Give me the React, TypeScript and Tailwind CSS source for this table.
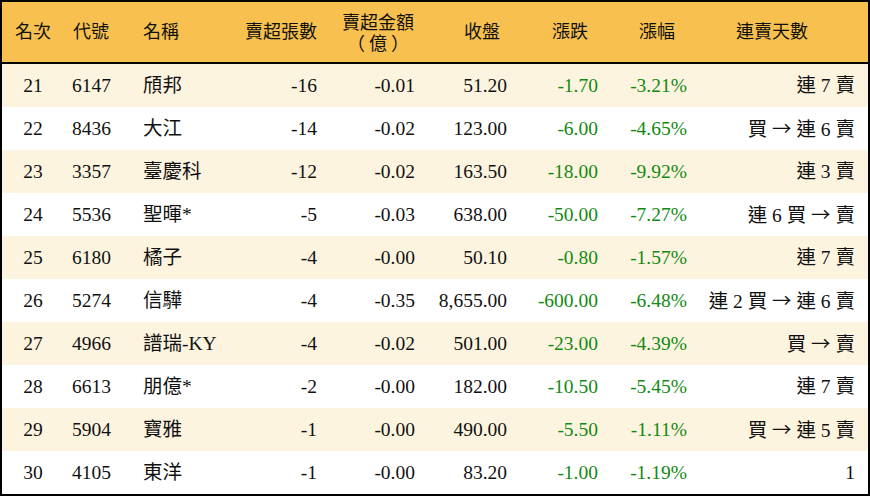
import React from 'react'

type Row = {
  rank: number
  code: string
  name: string
  lots: string
  amount: string
  close: string
  change: string
  pct: string
  streak: string
}

const rows: Row[] = [
  { rank: 21, code: '6147', name: '頎邦', lots: '-16', amount: '-0.01', close: '51.20', change: '-1.70', pct: '-3.21%', streak: '連 7 賣' },
  { rank: 22, code: '8436', name: '大江', lots: '-14', amount: '-0.02', close: '123.00', change: '-6.00', pct: '-4.65%', streak: '買 → 連 6 賣' },
  { rank: 23, code: '3357', name: '臺慶科', lots: '-12', amount: '-0.02', close: '163.50', change: '-18.00', pct: '-9.92%', streak: '連 3 賣' },
  { rank: 24, code: '5536', name: '聖暉*', lots: '-5', amount: '-0.03', close: '638.00', change: '-50.00', pct: '-7.27%', streak: '連 6 買 → 賣' },
  { rank: 25, code: '6180', name: '橘子', lots: '-4', amount: '-0.00', close: '50.10', change: '-0.80', pct: '-1.57%', streak: '連 7 賣' },
  { rank: 26, code: '5274', name: '信驊', lots: '-4', amount: '-0.35', close: '8,655.00', change: '-600.00', pct: '-6.48%', streak: '連 2 買 → 連 6 賣' },
  { rank: 27, code: '4966', name: '譜瑞-KY', lots: '-4', amount: '-0.02', close: '501.00', change: '-23.00', pct: '-4.39%', streak: '買 → 賣' },
  { rank: 28, code: '6613', name: '朋億*', lots: '-2', amount: '-0.00', close: '182.00', change: '-10.50', pct: '-5.45%', streak: '連 7 賣' },
  { rank: 29, code: '5904', name: '寶雅', lots: '-1', amount: '-0.00', close: '490.00', change: '-5.50', pct: '-1.11%', streak: '買 → 連 5 賣' },
  { rank: 30, code: '4105', name: '東洋', lots: '-1', amount: '-0.00', close: '83.20', change: '-1.00', pct: '-1.19%', streak: '1' },
]

// column widths add up to 866 (870 minus the 2px frame on each side)
const cols = 'grid grid-cols-[62px_71px_95px_97px_98px_92px_91px_89px_171px]'
const cjk = { fontFamily: '"Noto Sans CJK TC", sans-serif' }

// arrows look longer in the CJK face, so swap the font just for them
function Streak({ text }: { text: string }) {
  const parts = text.split('→')
  return (
    <>
      {parts.map((p, i) => (
        <React.Fragment key={i}>
          {i > 0 && <span style={cjk}>→</span>}
          {p}
        </React.Fragment>
      ))}
    </>
  )
}

export default function App() {
  return (
    <div
      className="w-[870px] h-[496px] bg-black pt-[2px] px-[2px] pb-[2px] text-[19.5px] text-[#111]"
      style={{ fontFamily: '"Liberation Serif", "Noto Sans CJK TC", serif' }}
    >
      {/* Header */}
      <div className={`${cols} h-[60px] items-center bg-[#f8c14f] border-b-2 border-black box-content text-[18px]`}>
        <div className="text-center">名次</div>
        <div className="pl-[9px]">代號</div>
        <div className="pl-[8px]">名稱</div>
        <div className="text-right pr-[10px]">賣超張數</div>
        <div className="flex justify-end pr-[11px]">
          <div className="flex flex-col items-center gap-[1px] leading-[18px]">
            <div>賣超金額</div>
            <div style={cjk} className="tracking-[4px] pl-[4px]">（億）</div>
          </div>
        </div>
        <div className="text-right pr-[17px]">收盤</div>
        <div className="text-right pr-[20px]">漲跌</div>
        <div className="text-right pr-[22px]">漲幅</div>
        <div className="text-right pr-[60px]">連賣天數</div>
      </div>

      {/* Rows */}
      {rows.map((r, i) => (
        <div
          key={r.rank}
          className={`${cols} h-[43px] items-center ${i % 2 === 0 ? 'bg-[#fdf4e0]' : 'bg-white'}`}
        >
          <div className="text-center">{r.rank}</div>
          <div className="pl-[8px]">{r.code}</div>
          <div className="pl-[8px] whitespace-nowrap">{r.name}</div>
          <div className="text-right pr-[10px]">{r.lots}</div>
          <div className="text-right pr-[10px]">{r.amount}</div>
          <div className="text-right pr-[10px]">{r.close}</div>
          <div className="text-right pr-[10px] text-[#128a12]">{r.change}</div>
          <div className="text-right pr-[10px] text-[#128a12]">{r.pct}</div>
          <div className="text-right pr-[13px] whitespace-pre">
            <Streak text={r.streak} />
          </div>
        </div>
      ))}
    </div>
  )
}
